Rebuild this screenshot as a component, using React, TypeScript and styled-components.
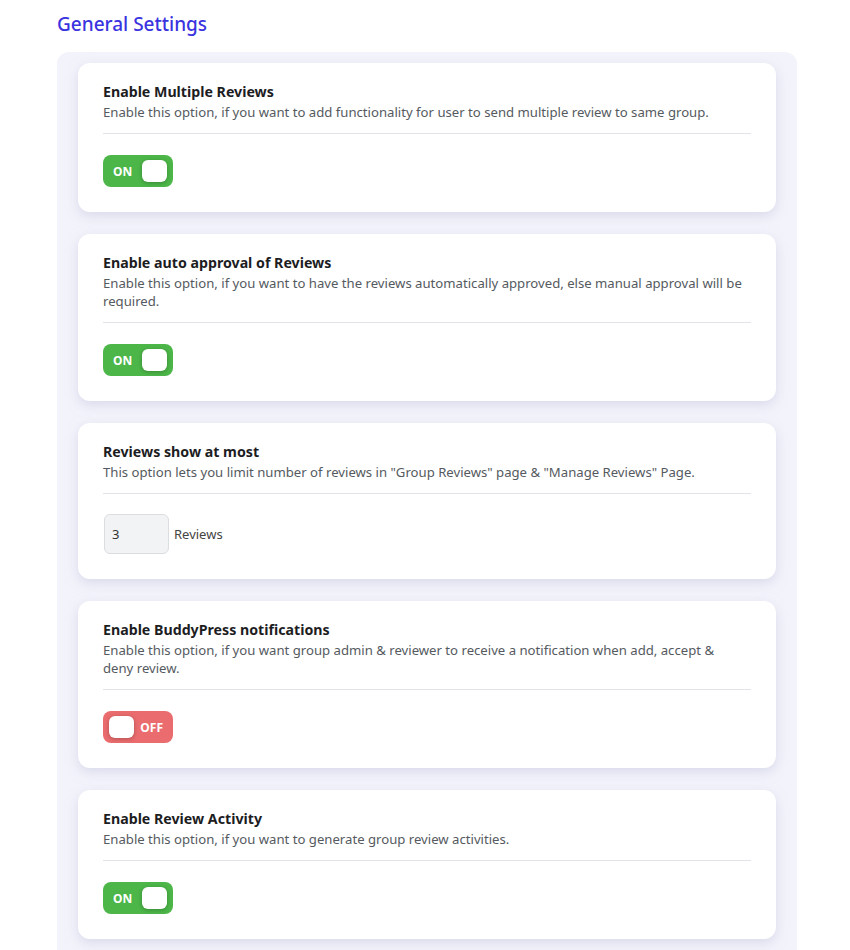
import React from "react";
import styled, { createGlobalStyle } from "styled-components";

const Global = createGlobalStyle`
  body { margin: 0; background: #ffffff; font-family: "Noto Sans", "Open Sans", sans-serif; }
`;

const Page = styled.div`
  padding: 8px 53px 0 57px;
`;

const Heading = styled.h2`
  margin: 0 0 12px;
  font-size: 19px;
  line-height: 32px;
  font-weight: 500;
  color: #3a33df;
`;

const Panel = styled.div`
  background: #f3f3fb;
  border-radius: 12px;
  padding: 11px 21px 30px;
  display: flex;
  flex-direction: column;
  gap: 22px;
`;

const Card = styled.div`
  background: #ffffff;
  border-radius: 12px;
  padding: 20px 25px 25px;
  box-shadow: 0 4px 12px rgba(200, 202, 225, 0.6);
`;

const Title = styled.div`
  font-size: 14.2px;
  line-height: 18px;
  font-weight: 700;
  color: #1d1d1f;
`;

const Desc = styled.div`
  margin-top: 2px;
  padding-right: 5px;
  font-size: 13.15px;
  line-height: 18px;
  color: #555a60;
`;

const Divider = styled.div`
  height: 1px;
  background: #e2e2e8;
  margin: 12px 0 21px;
`;

const Toggle = styled.div<{ $on: boolean }>`
  width: 70px;
  height: 32px;
  border-radius: 8px;
  box-sizing: border-box;
  background: ${(p) => (p.$on ? "#4cb648" : "#ea6c6e")};
  display: flex;
  flex-direction: ${(p) => (p.$on ? "row" : "row-reverse")};
  align-items: center;
  justify-content: space-between;
  padding: ${(p) => (p.$on ? "0 6px 0 10px" : "0 10px 0 6px")};
`;

const ToggleText = styled.span`
  color: #ffffff;
  font-size: 12px;
  font-weight: 700;
`;

const Knob = styled.span`
  width: 25px;
  height: 22px;
  border-radius: 6px;
  background: #ffffff;
  box-shadow: 0 1px 4px rgba(0, 0, 0, 0.25);
`;

const InputRow = styled.div`
  display: flex;
  align-items: center;
  gap: 5px;
  margin-top: -1px;
`;

const NumInput = styled.div`
  width: 65px;
  height: 40px;
  box-sizing: border-box;
  border: 1px solid #dcdde0;
  border-radius: 6px;
  background: #f2f3f5;
  padding: 0 7px;
  display: flex;
  align-items: center;
  font-size: 13px;
  color: #333;
  margin-left: 1px;
`;

const Label = styled.span`
  font-size: 13px;
  color: #444;
`;

const Switch = ({ on }: { on: boolean }) => (
  <Toggle $on={on}>
    <ToggleText>{on ? "ON" : "OFF"}</ToggleText>
    <Knob />
  </Toggle>
);

const settings = [
  {
    title: "Enable Multiple Reviews",
    desc: "Enable this option, if you want to add functionality for user to send multiple review to same group.",
    on: true,
  },
  {
    title: "Enable auto approval of Reviews",
    desc: "Enable this option, if you want to have the reviews automatically approved, else manual approval will be required.",
    on: true,
  },
  {
    title: "Reviews show at most",
    desc: 'This option lets you limit number of reviews in "Group Reviews" page & "Manage Reviews" Page.',
    input: true,
  },
  {
    title: "Enable BuddyPress notifications",
    desc: "Enable this option, if you want group admin & reviewer to receive a notification when add, accept & deny review.",
    on: false,
  },
  {
    title: "Enable Review Activity",
    desc: "Enable this option, if you want to generate group review activities.",
    on: true,
  },
];

export default function App() {
  return (
    <Page>
      <Global />
      <Heading>General Settings</Heading>
      <Panel>
        {settings.map((s) => (
          <Card key={s.title}>
            <Title>{s.title}</Title>
            <Desc>{s.desc}</Desc>
            <Divider />
            {s.input ? (
              <InputRow>
                <NumInput>3</NumInput>
                <Label>Reviews</Label>
              </InputRow>
            ) : (
              <Switch on={!!s.on} />
            )}
          </Card>
        ))}
      </Panel>
    </Page>
  );
}
